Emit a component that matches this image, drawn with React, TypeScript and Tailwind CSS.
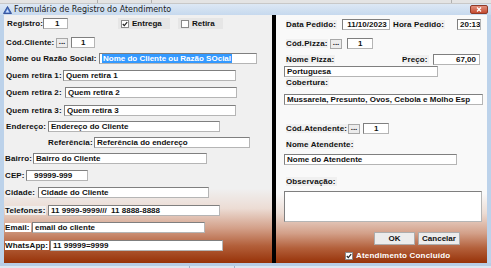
import React from "react";

function Field({
  w,
  value = "",
  className = "",
  h = "h-[11px]",
}: {
  w: string;
  value?: React.ReactNode;
  className?: string;
  h?: string;
}) {
  return (
    <div
      className={`${w} ${h} shrink-0 bg-white border border-[#b5b5b5] border-t-[#7f7f7f] border-l-[#7f7f7f] pl-[2px] text-[8px] font-bold leading-[9px] text-[#111] whitespace-nowrap overflow-hidden ${className}`}
    >
      {value}
    </div>
  );
}

function Label({ w, children, className = "" }: { w: string; children: React.ReactNode; className?: string }) {
  return (
    <div className={`${w} shrink-0 text-[8px] font-bold leading-[11px] tracking-[0.1px] text-[#111] whitespace-nowrap`}>
      <span className={`bg-[#f0f0f0] pr-[1px] ${className}`}>{children}</span>
    </div>
  );
}

function DotsButton() {
  return (
    <div className="w-[12px] h-[10px] shrink-0 bg-[#ececec] border border-[#a8a8a8] text-[8px] font-bold leading-[6px] text-center text-[#111]">
      ...
    </div>
  );
}

function Check({ checked }: { checked: boolean }) {
  return (
    <div className="w-[8px] h-[8px] shrink-0 bg-white border border-[#8a8a8a] flex items-center justify-center">
      {checked && (
        <svg width="6" height="6" viewBox="0 0 6 6">
          <path d="M0.8 3 L2.3 4.6 L5.2 1.2" stroke="#222" strokeWidth="1.2" fill="none" />
        </svg>
      )}
    </div>
  );
}

export default function App() {
  return (
    <div className="w-[491px] h-[268px] bg-[#bcd2ea] flex flex-col overflow-hidden font-['Liberation_Sans',Arial,sans-serif]">
      {/* strip of the window behind */}
      <div className="h-[4px] bg-[#e4e4e4] border-b border-[#c8c8c8] flex">
        <div className="w-[98px] border-r border-[#b0b0b0]" />
        <div className="w-[54px] border-r border-[#b0b0b0]" />
        <div className="w-[300px] border-r border-[#b0b0b0]" />
      </div>

      {/* title bar */}
      <div className="h-[11px] bg-[linear-gradient(to_bottom,#dde8f5,#c6d9ee)] flex items-center pl-[3px] pr-[3px]">
        <svg width="9" height="8" viewBox="0 0 9 8" className="shrink-0">
          <path d="M4.5 0.5 L8.5 7.5 L0.5 7.5 Z" fill="#4a78c8" stroke="#23408a" strokeWidth="0.8" />
          <path d="M4.5 3 L6.3 6.5 L2.7 6.5 Z" fill="#cfe0ff" />
        </svg>
        <span className="ml-[2px] font-['DejaVu_Sans',sans-serif] text-[8px] leading-[11px] text-[#1c1c1c]">
          Formulário de Registro do Atendimento
        </span>
        <div className="ml-auto w-[18px] h-[9px] rounded-[2px] bg-[linear-gradient(to_bottom,#e3907c,#c44a30)] border border-[#8e3a28] flex items-center justify-center">
          <svg width="6" height="5" viewBox="0 0 6 5">
            <path d="M1 0.5 L5 4.5 M5 0.5 L1 4.5" stroke="white" strokeWidth="1.3" />
          </svg>
        </div>
      </div>

      {/* body */}
      <div className="h-[248px] flex px-[4px]">
        {/* left panel */}
        <div className="w-[268px] h-full flex flex-col bg-[linear-gradient(to_bottom,#f0f0f0_0%,#f0f0f0_70%,#ecdcd4_78%,#d3a089_86%,#b3603b_93%,#973208_100%)]">
          <div className="mt-[3px] h-[11px] flex items-center pl-[3px]">
            <Label w="w-[36px]">Registro:</Label>
            <Field w="w-[25px]" value="1" className="pl-[11px]" />
            <div className="ml-[50px] w-[52px] h-[11px] bg-[#e6e6e6] flex items-center pl-[3px]">
              <Check checked />
              <span className="ml-[3px] text-[8px] font-bold text-[#111]">Entrega</span>
            </div>
            <div className="ml-[8px] w-[45px] h-[11px] bg-[#e6e6e6] flex items-center pl-[3px]">
              <Check checked={false} />
              <span className="ml-[3px] text-[8px] font-bold text-[#111]">Retira</span>
            </div>
          </div>

          <div className="mt-[8px] h-[11px] flex items-center pl-[2px]">
            <Label w="w-[50px]">Cód.Cliente:</Label>
            <DotsButton />
            <Field w="w-[24px]" value="1" className="ml-[3px] pl-[9px]" />
          </div>

          <div className="mt-[5px] h-[11px] flex items-center pl-[2px]">
            <Label w="w-[93px]">Nome ou Razão Social:</Label>
            <Field
              w="w-[158px]"
              value={<span className="bg-[#3399ff] text-white px-[1px]">Nome do Cliente ou Razão SOcial</span>}
            />
          </div>

          <div className="mt-[6px] h-[11px] flex items-center pl-[2px]">
            <Label w="w-[57px]">Quem retira 1:</Label>
            <Field w="w-[173px]" value="Quem retira 1" />
          </div>
          <div className="mt-[6px] h-[11px] flex items-center pl-[2px]">
            <Label w="w-[59px]">Quem retira 2:</Label>
            <Field w="w-[172px]" value="Quem retira 2" />
          </div>
          <div className="mt-[7px] h-[11px] flex items-center pl-[2px]">
            <Label w="w-[58px]">Quem retira 3:</Label>
            <Field w="w-[172px]" value="Quem retira 3" />
          </div>

          <div className="mt-[5px] h-[11px] flex items-center pl-[2px]">
            <Label w="w-[42px]">Endereço:</Label>
            <Field w="w-[172px]" value="Endereço do Cliente" />
          </div>
          <div className="mt-[5px] h-[11px] flex items-center pl-[44px]">
            <Label w="w-[46px]">Referência:</Label>
            <Field w="w-[156px]" value="Referência do endereço" />
          </div>
          <div className="mt-[5px] h-[11px] flex items-center pl-[1px]">
            <Label w="w-[28px]">Bairro:</Label>
            <Field w="w-[174px]" value="Bairro do Cliente" />
          </div>
          <div className="mt-[6px] h-[11px] flex items-center pl-[1px]">
            <Label w="w-[21px]">CEP:</Label>
            <Field w="w-[62px]" value="99999-999" className="pl-[7px]" />
          </div>
          <div className="mt-[6px] h-[11px] flex items-center pl-[1px]">
            <Label w="w-[33px]">Cidade:</Label>
            <Field w="w-[171px]" value="Cidade do Cliente" />
          </div>
          <div className="mt-[7px] h-[11px] flex items-center pl-[1px]">
            <Label w="w-[43px]">Telefones:</Label>
            <Field w="w-[172px]" value="11 9999-9999///  11 8888-8888" className="whitespace-pre" />
          </div>
          <div className="mt-[6px] h-[11px] flex items-center pl-[1px]">
            <Label w="w-[27px]" className="bg-white">Email:</Label>
            <Field w="w-[173px]" value="email do cliente" />
          </div>
          <div className="mt-[7px] h-[11px] flex items-center pl-[1px]">
            <Label w="w-[45px]" className="bg-white">WhatsApp:</Label>
            <Field w="w-[173px]" value="11 99999=9999" />
          </div>
        </div>

        {/* divider */}
        <div className="w-[4px] h-full bg-black" />

        {/* right panel */}
        <div className="w-[211px] h-full flex flex-col bg-[linear-gradient(to_bottom,#f9f9f9_0%,#f9f9f9_72%,#ecdcd4_80%,#d3a089_88%,#b3603b_94%,#973208_100%)]">
          <div className="mt-[4px] h-[11px] flex items-center pl-[10px]">
            <Label w="w-[56px]">Data Pedido:</Label>
            <Field w="w-[48px]" value="11/10/2023" className="text-center pl-0" />
            <Label w="w-[64px] ml-[3px]">Hora Pedido:</Label>
            <Field w="w-[24px]" value="20:13" className="text-center pl-0" />
          </div>

          <div className="mt-[8px] h-[11px] flex items-center pl-[10px]">
            <Label w="w-[44px]">Cód.Pizza:</Label>
            <DotsButton />
            <Field w="w-[26px]" value="1" className="ml-[5px] pl-[10px]" />
          </div>

          <div className="mt-[5px] h-[11px] flex items-center pl-[10px]">
            <Label w="w-[116px]">Nome Pizza:</Label>
            <Label w="w-[31px]">Preço:</Label>
            <Field w="w-[47px]" value="67,00" className="text-right pr-[3px]" />
          </div>
          <div className="mt-[1px] pl-[8px]">
            <Field w="w-[154px]" value="Portuguesa" />
          </div>

          <div className="mt-[0px] h-[11px] flex items-center pl-[10px]">
            <Label w="w-[60px]">Cobertura:</Label>
          </div>
          <div className="mt-[6px] pl-[8px]">
            <Field w="w-[199px]" value="Mussarela, Presunto, Ovos, Cebola e Molho Esp" />
          </div>

          <div className="mt-[18px] h-[11px] flex items-center pl-[10px]">
            <Label w="w-[62px]">Cód.Atendente:</Label>
            <DotsButton />
            <Field w="w-[26px]" value="1" className="ml-[3px] pl-[10px]" />
          </div>

          <div className="mt-[5px] h-[11px] flex items-center pl-[10px]">
            <Label w="w-[80px]">Nome Atendente:</Label>
          </div>
          <div className="mt-[4px] pl-[8px]">
            <Field w="w-[173px]" value="Nome do Atendente" />
          </div>

          <div className="mt-[11px] h-[11px] flex items-center pl-[10px]">
            <Label w="w-[60px]">Observação:</Label>
          </div>
          <div className="mt-[4px] pl-[8px]">
            <Field w="w-[198px]" h="h-[31px]" />
          </div>

          <div className="mt-[10px] h-[13px] flex items-center pl-[98px]">
            <div className="w-[41px] h-[13px] bg-[#ececec] border border-[#adadad] text-[8px] font-bold leading-[11px] text-center text-[#111]">
              OK
            </div>
            <div className="ml-[3px] w-[42px] h-[13px] bg-[#ececec] border border-[#adadad] text-[8px] font-bold leading-[11px] text-center text-[#111]">
              Cancelar
            </div>
          </div>

          <div className="mt-[6px] h-[9px] flex items-center pl-[69px]">
            <Check checked />
            <span className="ml-[3px] text-[8px] font-bold leading-[9px] tracking-[0.2px] text-white">Atendimento Concluído</span>
          </div>
        </div>
      </div>

      <div className="h-[3px] bg-[#b7cde6]" />
      <div className="h-[2px] bg-[#dce7f2] flex">
        <div className="w-[190px] border-r border-[#9fb4cc]" />
        <div className="w-[45px] border-r border-[#9fb4cc]" />
      </div>
    </div>
  );
}
